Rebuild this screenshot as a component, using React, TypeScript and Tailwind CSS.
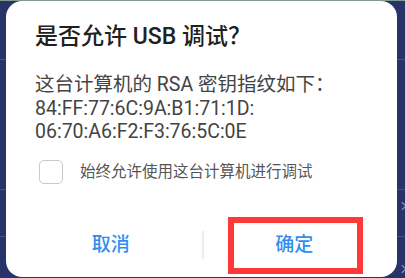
import { ChevronRight } from "lucide-react";

const font = 'Roboto, "Noto Sans CJK SC", sans-serif';

function BackgroundRows() {
  return (
    <div className="flex h-full flex-col border-t border-[#7f9c8c] bg-[#28336a]">
      <div className="h-[59px] border-b border-[#46507e]" />
      <div className="h-[130px] border-b border-[#46507e]" />
      <div className="flex h-[47px] items-center justify-end border-b border-[#46507e] pr-[0px]">
        <ChevronRight size={14} className="-mr-[6px] mt-[-14px] text-[#8f96b8]" />
      </div>
      <div className="flex flex-1 items-end justify-end">
        <ChevronRight size={14} className="-mr-[6px] mb-[2px] text-[#8f96b8]" />
      </div>
    </div>
  );
}

export default function App() {
  return (
    <div
      className="relative h-[278px] w-[405px] overflow-hidden"
      style={{ fontFamily: font }}
    >
      <BackgroundRows />

      <div className="absolute left-[6px] top-[1px] flex h-[276px] w-[391px] flex-col rounded-[16px] bg-white">
        <div className="px-[29px] pt-[20px]">
          <h1 className="text-[23px] font-medium leading-[32px] text-[#212121]">
            是否允许 USB 调试？
          </h1>

          <div className="mt-[20px] text-[19.5px] leading-[23.5px] text-[#444444]">
            <p>这台计算机的 RSA 密钥指纹如下：</p>
            <p>84:FF:77:6C:9A:B1:71:1D:</p>
            <p>06:70:A6:F2:F3:76:5C:0E</p>
          </div>

          <label className="mt-[16px] flex items-center gap-[17px]">
            <span className="ml-[4px] h-[24px] w-[24px] shrink-0 rounded-[5px] border-[1.5px] border-[#c9c9c9] bg-white" />
            <span className="text-[15.5px] leading-[24px] text-[#555555]">
              始终允许使用这台计算机进行调试
            </span>
          </label>
        </div>

        <div className="mt-auto flex items-center pb-[4px] pl-[14px] pr-[12px]">
          <button
            type="button"
            className="flex h-[56px] flex-1 items-center justify-center text-[19px] font-medium text-[#318ef0]"
          >
            取消
          </button>
          <div className="h-[28px] w-[2px] bg-[#ececec]" />
          <button
            type="button"
            className="relative flex h-[56px] flex-1 items-center justify-center text-[19px] font-medium text-[#318ef0]"
          >
            确定
            <span className="absolute left-1/2 top-1/2 h-[57px] w-[135px] -translate-x-[66px] -translate-y-[28px] border-[6px] border-[#ff3838]" />
          </button>
        </div>
      </div>
    </div>
  );
}
